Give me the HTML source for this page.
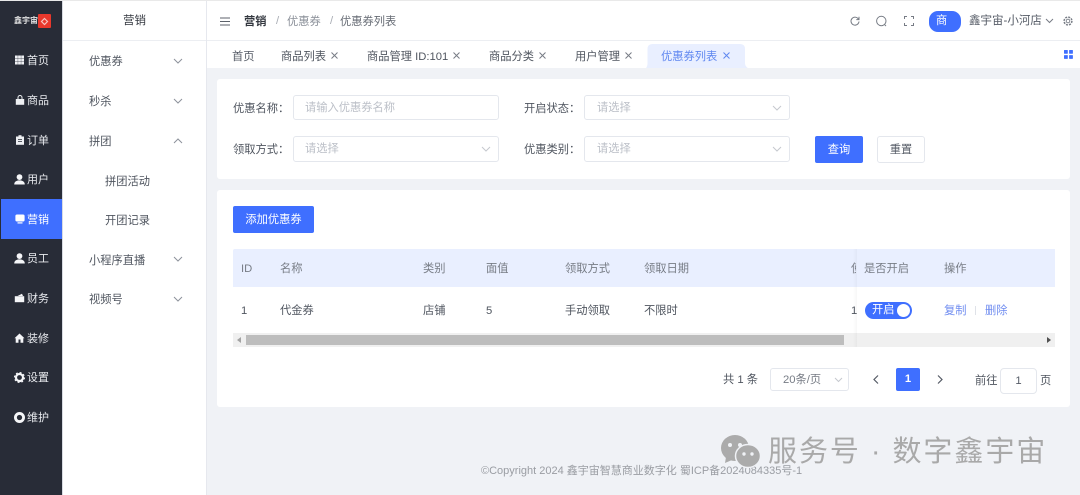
<!DOCTYPE html>
<html lang="zh"><head><meta charset="utf-8"><title>优惠券列表</title>
<style>
*{box-sizing:border-box}
html,body{margin:0;padding:0}
html{background:#f0f2f6}
body{width:1080px;height:495px;overflow:hidden;position:relative;background:#f0f2f6;font-family:"Liberation Sans","Noto Sans CJK SC",sans-serif;font-size:11.25px;color:#4f555f;filter:blur(.3px)}
div,span.a,svg.a{position:absolute}
.t{position:absolute;line-height:20px;height:20px;white-space:nowrap;margin-top:1px}
.box{background:#fff;border:1px solid #e4e7ed;border-radius:3px}
.card{background:#fff;border-radius:3px}
.ph{color:#bcc0c8}
.side{color:#e8eaee;font-size:11px}
.c{font-family:"Noto Sans CJK TC",sans-serif}
svg.a{overflow:visible}
</style></head><body>
<div style="left:0;top:0;width:1080px;height:1px;background:#e9e9e9"></div>
<!-- sidebar -->
<div style="left:0;top:1px;width:62px;height:494px;background:#282c37"></div>
<div style="left:62px;top:1px;width:1px;height:494px;background:#d8dbe2"></div>
<div style="left:1px;top:199px;width:61px;height:40px;background:#3f6fff"></div>
<span class="t" style="left:14px;top:10px;font-size:8px;color:#e5e5e5;font-weight:700">鑫宇宙</span>
<div style="left:38px;top:14px;width:13px;height:14px;background:#e8382c;border-radius:1px"></div>
<svg class="a" style="left:41px;top:18px" width="7" height="7" viewBox="0 0 7 7"><path d="M3.500 0.500L6.500 3.500 3.500 6.500 .5 3.500Z" fill="none" stroke="#f6c5c0" stroke-width="1.200"/></svg>
<span class="t side" style="left:27px;top:50px">首页</span>
<span class="t side" style="left:27px;top:90px">商品</span>
<span class="t side" style="left:27px;top:130px">订单</span>
<span class="t side" style="left:27px;top:169px">用户</span>
<span class="t side" style="left:27px;top:209px;color:#fff">营销</span>
<span class="t side" style="left:27px;top:248px">员工</span>
<span class="t side" style="left:27px;top:288px">财务</span>
<span class="t side" style="left:27px;top:328px">装修</span>
<span class="t side" style="left:27px;top:367px">设置</span>
<span class="t side" style="left:27px;top:407px">维护</span>
<svg class="a" style="left:14px;top:55px" width="11" height="10" viewBox="0 0 10 10" fill="#eef0f3"><path d="M.5 .5h2.800v2.800H.5zM3.600 .5h2.800v2.800H3.600zM6.700 .5h2.800v2.800H6.700zM.5 3.600h2.800v2.800H.5zM3.600 3.600h2.800v2.800H3.600zM6.700 3.600h2.800v2.800H6.700zM.5 6.700h2.800v2.800H.5zM3.600 6.700h2.800v2.800H3.600zM6.700 6.700h2.800v2.800H6.700z"/></svg>
<svg class="a" style="left:15px;top:95px" width="10" height="10" viewBox="0 0 10 10"><path d="M.8 4h8.400v5.800H.8z" fill="#eef0f3"/><path d="M3 4.500V2.500a2 2 0 0 1 4 0v2" fill="none" stroke="#eef0f3"/></svg>
<svg class="a" style="left:15px;top:135px" width="10" height="10" viewBox="0 0 10 10"><path d="M1 1.500h8v8.300H1z" fill="#eef0f3"/><path d="M3.500 .2h3v1.800h-3z" fill="#eef0f3"/><path d="M3 4.500h4M3 6.500h4" stroke="#282c37" stroke-width=".8"/></svg>
<svg class="a" style="left:14px;top:174px" width="11" height="11" viewBox="0 0 10 10" fill="#f5f6f8"><circle cx="5" cy="2.800" r="2.600"/><path d="M.2 9.500c0-2.500 2-3.700 4.800-3.700s4.800 1.200 4.800 3.700z"/></svg>
<svg class="a" style="left:15px;top:214px" width="10" height="10" viewBox="0 0 10 10" fill="#fff"><rect x=".4" y=".5" width="9.200" height="7" rx="1.600"/><path d="M2.500 8.300h5v1.200h-5z"/></svg>
<svg class="a" style="left:14px;top:253px" width="11" height="11" viewBox="0 0 10 10" fill="#f5f6f8"><circle cx="5" cy="2.800" r="2.600"/><path d="M.2 9.500c0-2.500 2-3.700 4.800-3.700s4.800 1.200 4.800 3.700z"/></svg>
<svg class="a" style="left:14px;top:293px" width="11" height="10" viewBox="0 0 10 10" fill="#f5f6f8"><path d="M.3 3.200h9.400v6H.3z"/><path d="M3 3l4.500-2.300 1 2.300z"/></svg>
<svg class="a" style="left:14px;top:333px" width="11" height="10" viewBox="0 0 10 10" fill="#f5f6f8"><path d="M5 .5L10 5.200 8.800 5.200V9.800H6V6.500H4V9.800H1.200V5.200H0z"/></svg>
<svg class="a" style="left:14px;top:372px" width="11" height="11" viewBox="0 0 10 10"><circle cx="5" cy="5" r="3.200" fill="none" stroke="#f5f6f8" stroke-width="2"/><circle cx="5" cy="5" r="4.500" fill="none" stroke="#f5f6f8" stroke-width="1.100" stroke-dasharray="1.700 1.830"/></svg>
<svg class="a" style="left:14px;top:412px" width="11" height="11" viewBox="0 0 10 10"><circle cx="5" cy="5" r="3.700" fill="none" stroke="#f5f6f8" stroke-width="2.600"/></svg>

<!-- submenu -->
<div style="left:63px;top:1px;width:143px;height:494px;background:#fff"></div>
<div style="left:63px;top:40px;width:143px;height:1px;background:#eceef2"></div>
<div style="left:206px;top:1px;width:1px;height:494px;background:#e6e8ee"></div>
<span class="t" style="left:123px;top:10px;color:#33373f;font-size:11.500px">营销</span>
<span class="t" style="left:89px;top:51px">优惠券</span>
<span class="t" style="left:89px;top:91px">秒杀</span>
<span class="t" style="left:89px;top:131px">拼团</span>
<span class="t" style="left:105px;top:171px">拼团活动</span>
<span class="t" style="left:105px;top:210px">开团记录</span>
<span class="t" style="left:89px;top:250px">小程序直播</span>
<span class="t" style="left:89px;top:289px">视频号</span>
<svg class="a" style="left:173px;top:58px" width="10" height="6" viewBox="0 0 10 6"><path d="M1 1l4 4 4-4" fill="none" stroke="#8d929b"/></svg>
<svg class="a" style="left:173px;top:98px" width="10" height="6" viewBox="0 0 10 6"><path d="M1 1l4 4 4-4" fill="none" stroke="#8d929b"/></svg>
<svg class="a" style="left:173px;top:138px" width="10" height="6" viewBox="0 0 10 6"><path d="M1 5l4-4 4 4" fill="none" stroke="#8d929b"/></svg>
<svg class="a" style="left:173px;top:256px" width="10" height="6" viewBox="0 0 10 6"><path d="M1 1l4 4 4-4" fill="none" stroke="#8d929b"/></svg>
<svg class="a" style="left:173px;top:296px" width="10" height="6" viewBox="0 0 10 6"><path d="M1 1l4 4 4-4" fill="none" stroke="#8d929b"/></svg>

<!-- header -->
<div style="left:207px;top:1px;width:873px;height:67px;background:#fff"></div>
<div style="left:207px;top:40px;width:873px;height:1px;background:#eceef2"></div>
<svg class="a" style="left:220px;top:17px" width="10" height="9" viewBox="0 0 10 9"><path d="M0 1h10M0 4.500h10M0 8h10" stroke="#5d626b" stroke-width="1.100"/></svg>
<span class="t" style="left:244px;top:11px;color:#33373f;font-weight:700">营销</span>
<span class="t" style="left:276px;top:10px;color:#a8acb3">/</span>
<span class="t" style="left:287px;top:11px;color:#8a8f98">优惠券</span>
<span class="t" style="left:330px;top:10px;color:#a8acb3">/</span>
<span class="t" style="left:340px;top:11px;color:#666b74">优惠券列表</span>
<svg class="a" style="left:850px;top:16px" width="10" height="10" viewBox="0 0 10 10"><path d="M8.500 3.200A4 4 0 1 0 9 5.500" fill="none" stroke="#777c85"/><path d="M9 .8v2.800H6.300" fill="none" stroke="#777c85"/></svg>
<svg class="a" style="left:876px;top:16px" width="11" height="11" viewBox="0 0 11 11"><circle cx="5.300" cy="5" r="4.700" fill="none" stroke="#777c85"/><path d="M8.300 8.300l1.700 1.700" stroke="#777c85"/></svg>
<svg class="a" style="left:904px;top:16px" width="10" height="10" viewBox="0 0 10 10"><path d="M.5 3V.500H3M7 .5h2.500V3M9.500 7v2.500H7M3 9.500H.5V7" fill="none" stroke="#777c85"/></svg>
<div style="left:929px;top:11px;width:32px;height:21px;background:#3f6fff;border-radius:9px;color:#fff;line-height:21px;padding-left:7px">商</div>
<span class="t" style="left:969px;top:10px;color:#555b66;font-size:11.500px">鑫宇宙-小河店</span>
<svg class="a" style="left:1045px;top:18px" width="9" height="6" viewBox="0 0 9 6"><path d="M1 1l3.500 3.500L8 1" fill="none" stroke="#777c85"/></svg>
<svg class="a" style="left:1063px;top:16px" width="10" height="10" viewBox="0 0 10 10"><circle cx="5" cy="5" r="1.800" fill="none" stroke="#777c85" stroke-width=".9"/><circle cx="5" cy="5" r="3.900" fill="none" stroke="#777c85" stroke-width="1.500" stroke-dasharray="2 1.080"/></svg>

<!-- tabs -->
<span class="t" style="left:232px;top:46px;color:#555b66">首页</span>
<span class="t" style="left:281px;top:46px">商品列表</span>
<span class="t" style="left:367px;top:46px">商品管理 ID:101</span>
<span class="t" style="left:489px;top:46px">商品分类</span>
<span class="t" style="left:575px;top:46px">用户管理</span>
<svg class="a" style="left:331px;top:52px" width="7" height="7" viewBox="0 0 7 7"><path d="M.5.500l6 6M6.500.5l-6 6" stroke="#777c85"/></svg>
<svg class="a" style="left:453px;top:52px" width="7" height="7" viewBox="0 0 7 7"><path d="M.5.500l6 6M6.500.5l-6 6" stroke="#777c85"/></svg>
<svg class="a" style="left:539px;top:52px" width="7" height="7" viewBox="0 0 7 7"><path d="M.5.500l6 6M6.500.5l-6 6" stroke="#777c85"/></svg>
<svg class="a" style="left:625px;top:52px" width="7" height="7" viewBox="0 0 7 7"><path d="M.5.500l6 6M6.500.5l-6 6" stroke="#777c85"/></svg>
<svg class="a" style="left:646px;top:44px" width="102" height="24" viewBox="0 0 102 24"><path d="M0 24C1 23 1.500 21 1.500 19V5Q1.500 0 6.500 0H94Q99 0 99 5V19C99 21 100 23 102 24Z" fill="#e9efff"/></svg>
<span class="t" style="left:661px;top:46px;color:#5f87f0">优惠券列表</span>
<svg class="a" style="left:723px;top:52px" width="7" height="7" viewBox="0 0 7 7"><path d="M.5.500l6 6M6.500.5l-6 6" stroke="#5f87f0"/></svg>
<svg class="a" style="left:1064px;top:50px" width="9" height="9" viewBox="0 0 9 9" fill="#3f6fff"><rect width="3.800" height="3.800" rx=".5"/><rect x="5.100" width="3.800" height="3.800" rx=".5"/><rect y="5.100" width="3.800" height="3.800" rx=".5"/><rect x="5.100" y="5.100" width="3.800" height="3.800" rx=".5"/></svg>

<!-- search card -->
<div class="card" style="left:217px;top:79px;width:853px;height:100px"></div>
<span class="t" style="left:233px;top:97px">优惠名称<span class="c">：</span></span>
<span class="t" style="left:233px;top:138px">领取方式<span class="c">：</span></span>
<span class="t" style="left:524px;top:97px">开启状态<span class="c">：</span></span>
<span class="t" style="left:524px;top:138px">优惠类别<span class="c">：</span></span>
<div class="box" style="left:293px;top:95px;width:206px;height:25px"></div>
<div class="box" style="left:293px;top:136px;width:206px;height:26px"></div>
<div class="box" style="left:584px;top:95px;width:206px;height:25px"></div>
<div class="box" style="left:584px;top:136px;width:206px;height:26px"></div>
<span class="t ph" style="left:305px;top:97px">请输入优惠券名称</span>
<span class="t ph" style="left:305px;top:138px">请选择</span>
<span class="t ph" style="left:597px;top:97px">请选择</span>
<span class="t ph" style="left:597px;top:138px">请选择</span>
<svg class="a" style="left:481px;top:146px" width="10" height="6" viewBox="0 0 10 6"><path d="M1 1l4 4 4-4" fill="none" stroke="#c5c8ce"/></svg>
<svg class="a" style="left:772px;top:105px" width="10" height="6" viewBox="0 0 10 6"><path d="M1 1l4 4 4-4" fill="none" stroke="#c5c8ce"/></svg>
<svg class="a" style="left:772px;top:146px" width="10" height="6" viewBox="0 0 10 6"><path d="M1 1l4 4 4-4" fill="none" stroke="#c5c8ce"/></svg>
<div style="left:815px;top:136px;width:48px;height:27px;background:#3f6fff;border-radius:2px;color:#fff;text-align:center;line-height:28px">查询</div>
<div class="box" style="left:877px;top:136px;width:48px;height:27px;text-align:center;line-height:27px;color:#555b66">重置</div>

<!-- table card -->
<div class="card" style="left:217px;top:190px;width:853px;height:217px"></div>
<div style="left:233px;top:206px;width:81px;height:27px;background:#3f6fff;border-radius:2px;color:#fff;text-align:center;line-height:28px">添加优惠券</div>
<div style="left:233px;top:249px;width:822px;height:38px;background:#e9efff;border-radius:2px 0 0 0"></div>
<span class="t" style="left:241px;top:258px;color:#777c85">ID</span>
<span class="t" style="left:280px;top:258px;color:#777c85">名称</span>
<span class="t" style="left:423px;top:258px;color:#777c85">类别</span>
<span class="t" style="left:486px;top:258px;color:#777c85">面值</span>
<span class="t" style="left:565px;top:258px;color:#777c85">领取方式</span>
<span class="t" style="left:644px;top:258px;color:#777c85">领取日期</span>
<span class="t" style="left:851px;top:258px;color:#777c85;width:5px;overflow:hidden">使</span>
<span class="t" style="left:864px;top:258px;color:#777c85">是否开启</span>
<span class="t" style="left:944px;top:258px;color:#777c85">操作</span>
<span class="t" style="left:241px;top:300px">1</span>
<span class="t" style="left:280px;top:300px">代金券</span>
<span class="t" style="left:423px;top:300px">店铺</span>
<span class="t" style="left:486px;top:300px">5</span>
<span class="t" style="left:565px;top:300px">手动领取</span>
<span class="t" style="left:644px;top:300px">不限时</span>
<span class="t" style="left:851px;top:300px">1</span>
<div style="left:865px;top:302px;width:47px;height:17px;background:#3f6fff;border-radius:9px;color:#fff;line-height:17px;padding-left:7px">开启</div>
<div style="left:897px;top:304px;width:13px;height:13px;background:#fff;border-radius:50%"></div>
<span class="t" style="left:944px;top:300px;color:#6f8cf0">复制</span>
<div style="left:975px;top:306px;width:1px;height:9px;background:#dfe2e8"></div>
<span class="t" style="left:985px;top:300px;color:#6f8cf0">删除</span>
<!-- scrollbar -->
<div style="left:233px;top:333px;width:822px;height:14px;background:#f0f0f0"></div>
<div style="left:246px;top:335px;width:598px;height:10px;background:#bdbdbd"></div>
<svg class="a" style="left:237px;top:337px" width="4" height="6" viewBox="0 0 4 6"><path d="M4 0v6L0 3z" fill="#a3a3a3"/></svg>
<svg class="a" style="left:1047px;top:337px" width="4" height="6" viewBox="0 0 4 6"><path d="M0 0v6l4-3z" fill="#505050"/></svg>
<div style="left:853px;top:249px;width:4px;height:98px;background:linear-gradient(90deg,rgba(0,0,0,0),rgba(0,0,0,.035))"></div>
<!-- pagination -->
<span class="t" style="left:723px;top:369px">共 1 条</span>
<div class="box" style="left:770px;top:368px;width:79px;height:23px"></div>
<span class="t" style="left:783px;top:369px;color:#777c85">20条/页</span>
<svg class="a" style="left:834px;top:377px" width="9" height="6" viewBox="0 0 9 6"><path d="M1 1l3.500 3.500L8 1" fill="none" stroke="#c5c8ce"/></svg>
<svg class="a" style="left:873px;top:375px" width="6" height="9" viewBox="0 0 6 9"><path d="M5 .5l-4 4 4 4" fill="none" stroke="#555b66" stroke-width="1.200"/></svg>
<div style="left:896px;top:368px;width:24px;height:23px;background:#3f6fff;border-radius:2px;color:#fff;text-align:center;line-height:23px;font-weight:700">1</div>
<svg class="a" style="left:937px;top:375px" width="6" height="9" viewBox="0 0 6 9"><path d="M1 .5l4 4-4 4" fill="none" stroke="#555b66" stroke-width="1.200"/></svg>
<span class="t" style="left:975px;top:370px">前往</span>
<div class="box" style="left:1000px;top:368px;width:37px;height:26px;text-align:center;line-height:25px;color:#555b66;border-radius:4px">1</div>
<span class="t" style="left:1040px;top:370px">页</span>

<!-- footer -->
<span class="t" style="left:481px;top:460px;color:#9a9da3;font-size:11px">©Copyright 2024 鑫宇宙智慧商业数字化 蜀ICP备2024084335号-1</span>
<svg class="a" style="left:720px;top:433px" width="42" height="36" viewBox="0 0 42 36"><ellipse cx="15" cy="15" rx="14" ry="13" fill="#ababab"/><path d="M6 24l-1 6 7-3z" fill="#ababab"/><circle cx="10" cy="12" r="2" fill="#f0f2f6"/><circle cx="20" cy="12" r="2" fill="#f0f2f6"/><ellipse cx="28" cy="23" rx="12.500" ry="11.500" fill="#ababab" stroke="#f0f2f6" stroke-width="1.500"/><circle cx="24" cy="21" r="1.700" fill="#f0f2f6"/><circle cx="32" cy="21" r="1.700" fill="#f0f2f6"/></svg>
<span class="t" style="left:768px;top:435px;height:32px;line-height:32px;font-size:29px;letter-spacing:1.950px;color:#a9a9a9">服务号 · 数字鑫宇宙</span>
</body></html>
